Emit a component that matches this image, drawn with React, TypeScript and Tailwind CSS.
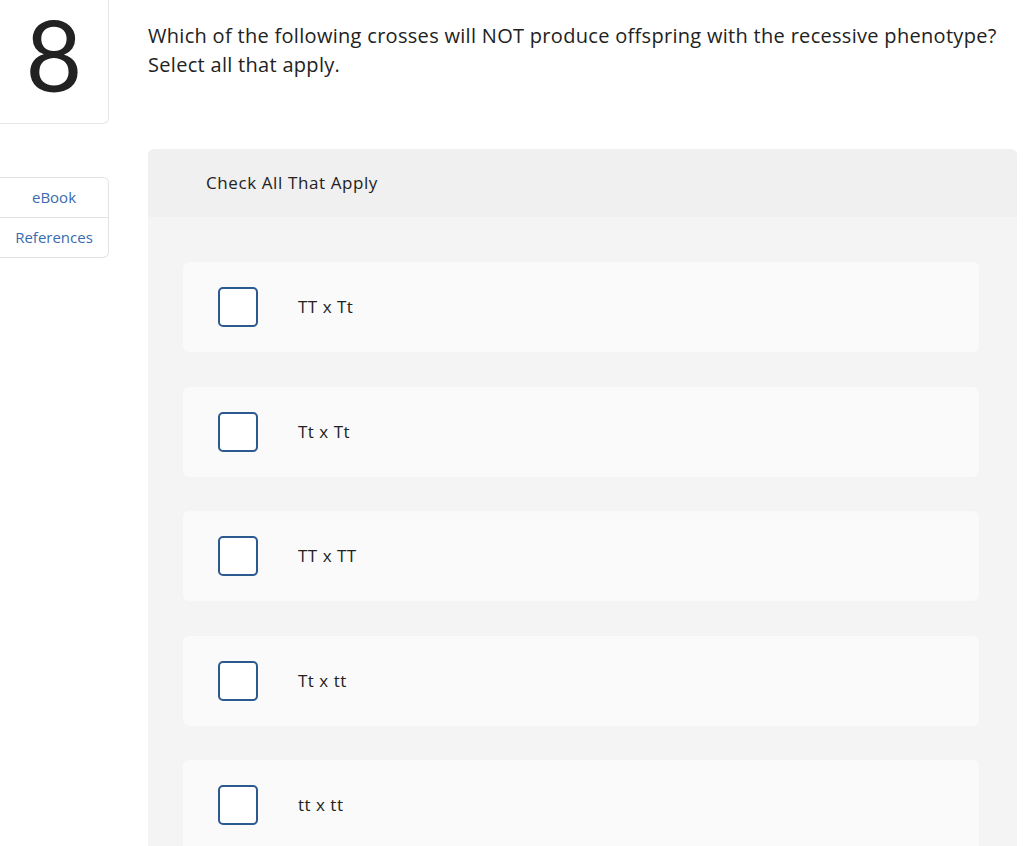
import React from "react";

const options = ["TT x Tt", "Tt x Tt", "TT x TT", "Tt x tt", "tt x tt"];

export default function App() {
    return (
        <div className="h-[846px] w-[1024px] overflow-hidden bg-white flex text-[#222] font-['Open_Sans',sans-serif]">
            {/* left column */}
            <div className="w-[109px] shrink-0">
                <div className="h-[124px] pt-[4px] border-r border-b border-[#e6e6e6] rounded-br-md flex items-start justify-center">
                    <span className="text-[98px] leading-[100px] font-normal font-['Lato',sans-serif] text-[#222]">8</span>
                </div>

                <div className="mt-[53px] border border-l-0 border-[#e3e3e3] rounded-r-md text-[15px] text-[#3a6bb0]">
                    <div className="h-[40px] flex items-center justify-center border-b border-[#e3e3e3]">eBook</div>
                    <div className="h-[39px] flex items-center justify-center">References</div>
                </div>
            </div>

            {/* question */}
            <div className="ml-[39px] w-[869px] shrink-0">
                <p className="pt-[21px] text-[20px] leading-[29px] tracking-[0.3px] text-[#222]">
                    Which of the following crosses will NOT produce offspring with the recessive phenotype?
                    <br />
                    Select all that apply.
                </p>

                <div className="mt-[70px] bg-[#f4f4f4] rounded-t-md min-h-[800px]">
                    <div className="h-[68px] bg-[#f0f0f0] rounded-t-md flex items-center pl-[58px] text-[17px] tracking-[0.6px] text-[#222]">
                        Check All That Apply
                    </div>

                    <div className="pl-[35px] pr-[38px] pt-[45px] flex flex-col gap-[34.5px]">
                        {options.map((opt) => (
                            <div key={opt} className="h-[90px] bg-[#fafafa] rounded-md flex items-center pl-[35px]">
                                <div className="w-10 h-10 bg-white border-[2.5px] border-[#2d5a8e] rounded-[5px]" />
                                <span className="ml-[40px] text-[17px] tracking-[0.5px] text-[#222]">{opt}</span>
                            </div>
                        ))}
                    </div>
                </div>
            </div>
        </div>
    );
}
